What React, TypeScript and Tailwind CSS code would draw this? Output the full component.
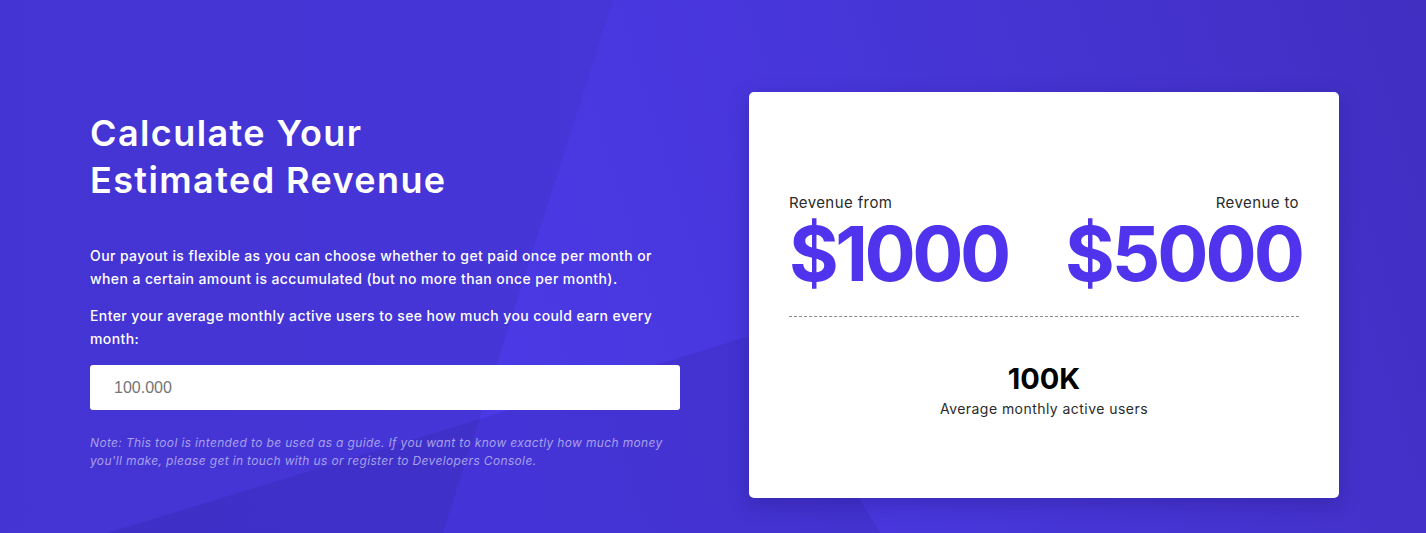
export default function App() {
  return (
    <div className="relative h-[533px] w-full overflow-hidden bg-[#4535d6] font-['Inter',sans-serif]">
      {/* background facets */}
      <svg className="absolute inset-0 h-full w-full" viewBox="0 0 1426 533" preserveAspectRatio="none">
        <defs>
          <linearGradient id="left" gradientUnits="userSpaceOnUse" x1="0" y1="0" x2="613" y2="0">
            <stop offset="0" stopColor="#4434d3" />
            <stop offset="1" stopColor="#4636d8" />
          </linearGradient>
          <linearGradient id="wedge" gradientUnits="userSpaceOnUse" x1="450" y1="300" x2="1426" y2="0">
            <stop offset="0" stopColor="#4b39e6" />
            <stop offset="0.45" stopColor="#4736d8" />
            <stop offset="1" stopColor="#412fc2" />
          </linearGradient>
        </defs>
        <rect x="0" y="0" width="1426" height="533" fill="url(#left)" />
        <polygon points="613,0 1426,0 1426,533 443,533" fill="url(#wedge)" />
        <polygon points="0,566 760,333 880,533" fill="#1a0f6a" fillOpacity="0.12" />
      </svg>

      <div className="relative ml-[90px] flex w-[1249px] items-start justify-between pt-[92px]">
        {/* Left column */}
        <div className="mt-[18px] w-[590px] text-white">
          <h2 className="text-[36px] font-semibold leading-[47px] tracking-[1.4px]">
            Calculate Your
            <br />
            Estimated Revenue
          </h2>
          <p className="mt-[40px] text-[14px] leading-[23px] font-medium tracking-[0.4px]">
            Our payout is flexible as you can choose whether to get paid once per month or when a certain amount is
            accumulated (but no more than once per month).
          </p>
          <p className="mt-[14px] text-[14px] leading-[23px] font-medium tracking-[0.4px]">
            Enter your average monthly active users to see how much you could earn every month:
          </p>
          <input
            type="text"
            placeholder="100.000"
            className="mt-[15px] block h-[45px] w-full rounded-[3px] bg-white pl-[24px] font-['Liberation_Sans',Arial,sans-serif] text-[16px] text-[#333] outline-none placeholder:text-[#757575]"
          />
          <p className="mt-[24px] text-[12px] italic leading-[18px] tracking-[0.35px] text-[#a7a0ec]">
            Note: This tool is intended to be used as a guide. If you want to know exactly how much money you'll
            make, please get in touch with us or register to Developers Console.
          </p>
        </div>

        {/* Right card */}
        <div className="h-[406px] w-[590px] rounded-[5px] bg-white px-10 pt-[101px] shadow-[0_6px_20px_rgba(20,10,90,0.25)]">
          <div className="flex items-start justify-between">
            <div>
              <div className="text-[15px] leading-5 tracking-[0.4px] text-[#2a2a2a]">Revenue from</div>
              <div className="mt-[2px] text-[76px] font-bold leading-none tracking-[-3.5px] text-[#5033ec]">$1000</div>
            </div>
            <div className="text-right">
              <div className="text-[15px] leading-5 tracking-[0.4px] text-[#2a2a2a]">Revenue to</div>
              <div className="-mr-[3px] mt-[2px] text-[76px] font-bold leading-none tracking-[-3px] text-[#5033ec]">
                $5000
              </div>
            </div>
          </div>
          <div className="mt-[25px] border-t border-dashed border-[#8a8a8a]" />
          <div className="mt-[44px] text-center">
            <div className="text-[29px] font-bold leading-[35px] text-black">100K</div>
            <div className="mt-[3px] text-[14px] leading-5 tracking-[0.45px] text-[#2a2a2a]">
              Average monthly active users
            </div>
          </div>
        </div>
      </div>
    </div>
  );
}
